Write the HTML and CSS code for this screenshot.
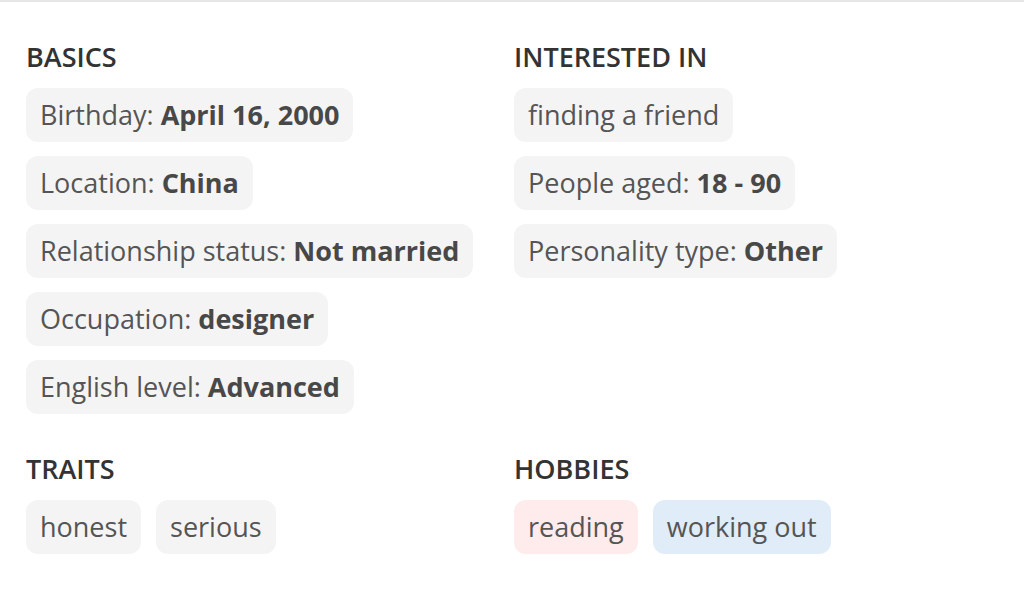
FILE: index.html
```html
<!DOCTYPE html>
<html lang="en">
<head>
    <meta charset="UTF-8">
    <meta name="viewport" content="width=device-width, initial-scale=1.0">
    <title>Profile details</title>
    <link rel="stylesheet" href="styles.css">
</head>
<body>
    <div class="profile">
        <div class="section">
            <h2>Basics</h2>
            <div class="chips stacked">
                <span class="chip">Birthday: <b>April 16, 2000</b></span>
                <span class="chip">Location: <b>China</b></span>
                <span class="chip">Relationship status: <b>Not married</b></span>
                <span class="chip">Occupation: <b>designer</b></span>
                <span class="chip">English level: <b>Advanced</b></span>
            </div>
        </div>

        <div class="section">
            <h2>Interested in</h2>
            <div class="chips stacked">
                <span class="chip">finding a friend</span>
                <span class="chip">People aged: <b>18 - 90</b></span>
                <span class="chip">Personality type: <b>Other</b></span>
            </div>
        </div>

        <div class="section">
            <h2>Traits</h2>
            <div class="chips">
                <span class="chip">honest</span>
                <span class="chip">serious</span>
            </div>
        </div>

        <div class="section">
            <h2>Hobbies</h2>
            <div class="chips">
                <span class="chip pink">reading</span>
                <span class="chip blue">working out</span>
            </div>
        </div>
    </div>
</body>
</html>
```

FILE: styles.css
```css
/* Base */
* {
    margin: 0;
    padding: 0;
    box-sizing: border-box;
}

body {
    font-family: 'Open Sans', 'Liberation Sans', sans-serif;
    background: #fff;
    color: #555;
}

/* Layout */
.profile {
    border-top: 2px solid #e6e6e6;
    padding: 39px 26px 0;
    display: grid;
    grid-template-columns: 488px 1fr;
    row-gap: 39px;
}

h2 {
    font-size: 27px;
    font-weight: 600;
    color: #333;
    text-transform: uppercase;
    line-height: 32px;
    margin-bottom: 15px;
}

/* Chips */
.chips {
    display: flex;
    flex-wrap: wrap;
    gap: 14px 15px;
}

.chips.stacked {
    flex-direction: column;
    align-items: flex-start;
}

.chip {
    display: inline-block;
    height: 54px;
    line-height: 54px;
    padding: 0 14px;
    border-radius: 12px;
    background: #f4f4f4;
    font-size: 27px;
    color: #555;
    white-space: nowrap;
}

.chip b {
    font-weight: 700;
    color: #484848;
}

.chip.pink {
    background: #fdeceb;
}

.chip.blue {
    background: #e0ecf7;
}
```
